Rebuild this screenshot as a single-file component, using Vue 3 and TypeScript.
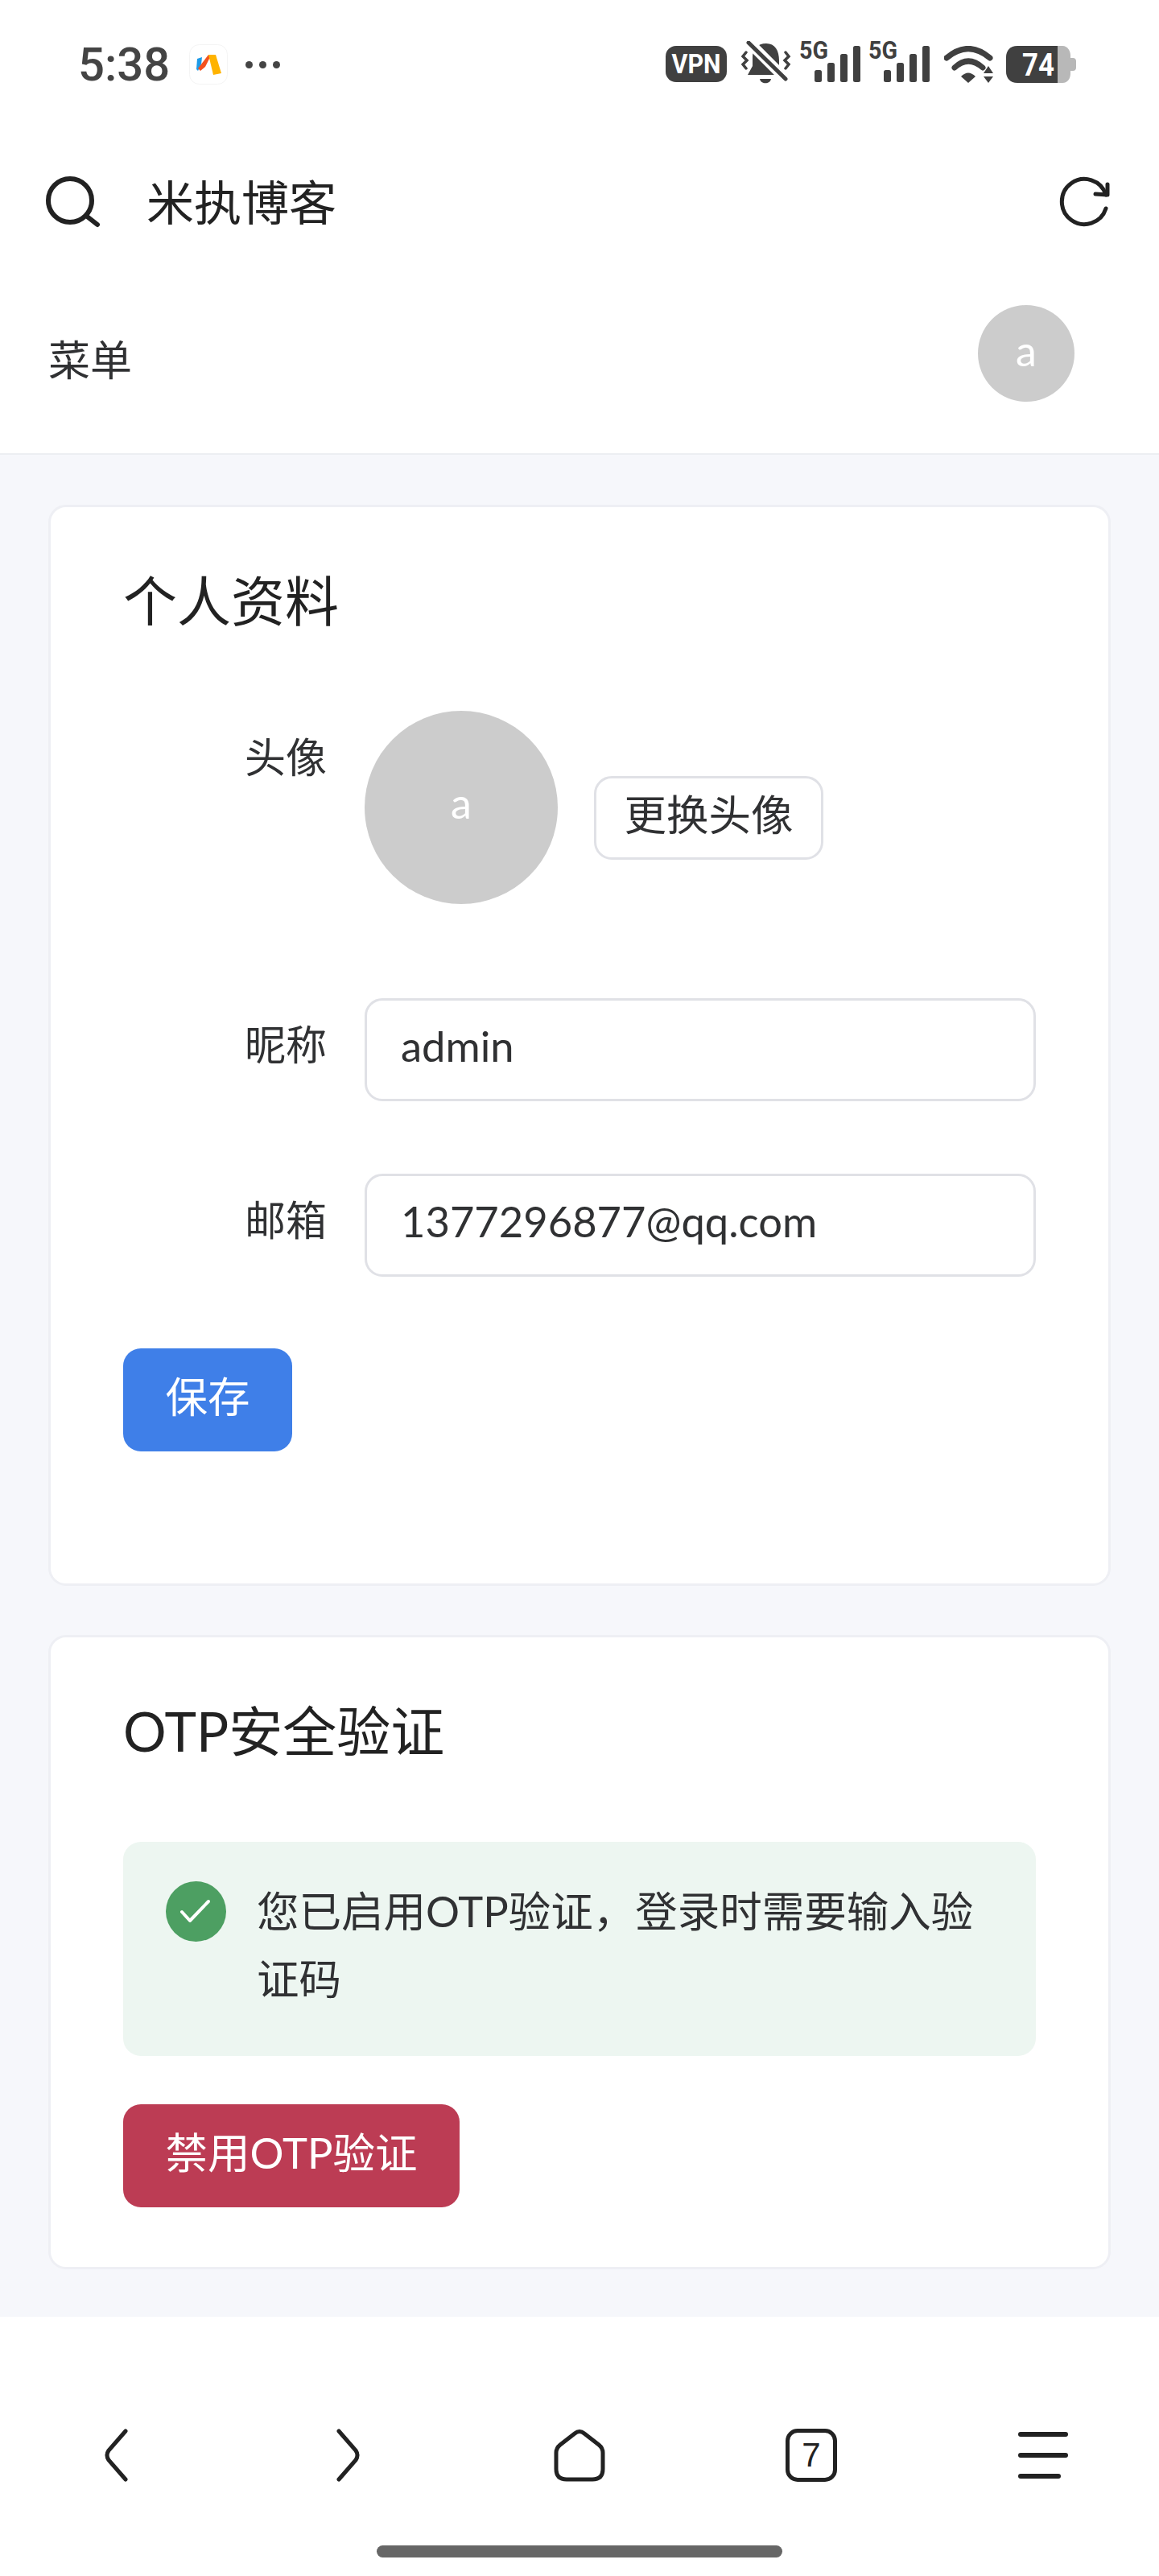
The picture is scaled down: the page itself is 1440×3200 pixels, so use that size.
<script setup lang="ts">
import { ref } from 'vue';

const nickname = ref('admin');
const email = ref('1377296877@qq.com');
</script>

<template>
  <div class="page">
    <div class="status">
      <div class="status-left">
        <span class="time">5:38</span>
        <svg class="app-icon" width="48" height="50" viewBox="0 0 48 50">
          <rect x="0.5" y="0.5" width="47" height="49" rx="12" fill="#fff" stroke="#f4f4f4" />
          <polygon points="10,18 16,16 15,25 11,33 9,31" fill="#1e9be8" />
          <polygon points="11,30 24,13 27,14 20,28 14,33" fill="#f4511e" />
          <polygon points="24,13 33,13 40,36 30,38" fill="#ffb300" />
        </svg>
        <span class="dots"><i></i><i></i><i></i></span>
      </div>
      <div class="status-right">
        <svg class="drop-4" width="76" height="53" viewBox="0 -4 76 53">
          <rect width="76" height="45" rx="13" fill="#404040" />
          <text x="38" y="34" text-anchor="middle" class="svg-bold" font-size="33" fill="#fff" textLength="61" lengthAdjust="spacingAndGlyphs">VPN</text>
        </svg>
        <svg class="ml-8 drop-2" width="62" height="53" viewBox="0 0 62 53">
          <path d="M31 3C42 3 47 12 47 24V31L53 42H8L14 31V20C14 10 20 3 31 3Z" fill="#404040" />
          <path d="M9 1L55 47" stroke="#fff" stroke-width="13" />
          <path d="M9 2L55 47" stroke="#404040" stroke-width="5" stroke-linecap="round" />
          <path d="M23 47H37C36 54 24 54 23 47Z" fill="#404040" />
          <path d="M6 14L2 19L7 24L2 29L6 34M55 14L59 19L54 24L59 29L55 34" fill="none" stroke="#404040" stroke-width="3.5" stroke-linecap="round" />
        </svg>
        <svg width="76" height="62" viewBox="0 -10 76 62">
          <text x="0" y="23" class="svg-bold" font-size="32" fill="#404040" textLength="36" lengthAdjust="spacingAndGlyphs">5G</text>
          <rect x="19" y="37" width="9" height="15" rx="2.5" fill="#404040" />
          <rect x="35" y="28" width="9" height="24" rx="2.5" fill="#404040" />
          <rect x="51" y="17" width="9" height="35" rx="2.5" fill="#404040" />
          <rect x="67" y="7" width="9" height="45" rx="2.5" fill="#404040" />
        </svg>
        <svg width="76" height="62" viewBox="0 -10 76 62">
          <text x="0" y="23" class="svg-bold" font-size="32" fill="#404040" textLength="36" lengthAdjust="spacingAndGlyphs">5G</text>
          <rect x="19" y="37" width="9" height="15" rx="2.5" fill="#404040" />
          <rect x="35" y="28" width="9" height="24" rx="2.5" fill="#404040" />
          <rect x="51" y="17" width="9" height="35" rx="2.5" fill="#404040" />
          <rect x="67" y="7" width="9" height="45" rx="2.5" fill="#404040" />
        </svg>
        <svg class="ml-8 drop-2" width="62" height="47" viewBox="0 0 62 47">
          <path d="M3 15Q30 -8 57 15" fill="none" stroke="#404040" stroke-width="7" stroke-linecap="round" />
          <path d="M13 27Q30 11 48 27" fill="none" stroke="#404040" stroke-width="7" stroke-linecap="round" />
          <path d="M21 38Q30 29 39 38L30 46Z" fill="#404040" />
          <path d="M55 25L61 34H49ZM49 38H61L55 46Z" fill="#404040" />
        </svg>
        <svg class="ml-5 drop-1" width="88" height="46" viewBox="0 0 88 46">
          <path d="M60 0H70C77 0 80 7 80 12V34C80 40 77 46 70 46H60Z" fill="#b8b8b8" />
          <path d="M80 15H83C86 15 87 17 87 19V27C87 29 86 31 83 31H80Z" fill="#b8b8b8" />
          <path d="M14 0H64V46H14C5 46 0 40 0 32V14C0 6 5 0 14 0Z" fill="#404040" />
          <text x="40" y="37" text-anchor="middle" class="svg-bold" font-size="39" fill="#fff" textLength="40" lengthAdjust="spacingAndGlyphs">74</text>
        </svg>
      </div>
    </div>

    <div class="browser-bar">
      <svg width="72" height="68" viewBox="0 0 72 68">
        <circle cx="33" cy="33" r="27" fill="none" stroke="#222" stroke-width="6" />
        <path d="M53 52L67 63" fill="none" stroke="#222" stroke-width="6" stroke-linecap="round" />
      </svg>
      <span class="site-title">米执博客</span>
      <svg class="reload" width="66" height="66" viewBox="0 0 66 66">
        <path d="M58 42A28 28 0 1 1 58 25" fill="none" stroke="#222" stroke-width="5" stroke-linecap="round" />
        <path d="M60 12L60 25L45 24" fill="none" stroke="#222" stroke-width="5" stroke-linecap="round" stroke-linejoin="round" />
      </svg>
    </div>

    <div class="nav">
      <span class="nav-menu">菜单</span>
      <div class="avatar avatar-small">a</div>
    </div>

    <main class="content">
      <section class="card card-profile">
        <h2 class="card-title">个人资料</h2>
        <div class="row row-avatar">
          <label class="row-label">头像</label>
          <div class="avatar avatar-big">a</div>
          <button class="btn btn-plain">更换头像</button>
        </div>
        <div class="row row-nick">
          <label class="row-label">昵称</label>
          <input v-model="nickname" class="input" type="text" />
        </div>
        <div class="row row-mail">
          <label class="row-label">邮箱</label>
          <input v-model="email" class="input" type="text" />
        </div>
        <button class="btn btn-primary">保存</button>
      </section>

      <section class="card card-otp">
        <h2 class="card-title">OTP安全验证</h2>
        <div class="alert">
          <svg class="alert-icon" width="75" height="75" viewBox="0 0 75 75">
            <circle cx="37.5" cy="37.5" r="37.5" fill="#4d9f62" />
            <path d="M20 38L30 49L53 25" fill="none" stroke="#fff" stroke-width="4" stroke-linecap="round" stroke-linejoin="round" />
          </svg>
          <p class="alert-text">您已启用OTP验证，登录时需要输入验证码</p>
        </div>
        <button class="btn btn-danger">禁用OTP验证</button>
      </section>
    </main>

    <footer class="bottom">
      <div class="bottom-icons">
        <svg width="29" height="66" viewBox="0 0 29 66">
          <path d="M26 3L5 27Q1 33 5 39L26 63" fill="none" stroke="#222" stroke-width="5" stroke-linecap="round" />
        </svg>
        <svg width="29" height="66" viewBox="0 0 29 66">
          <path d="M3 3L24 27Q28 33 24 39L3 63" fill="none" stroke="#222" stroke-width="5" stroke-linecap="round" />
        </svg>
        <svg width="64" height="66" viewBox="0 0 64 66">
          <path d="M26 6Q32 1 38 6L56 20Q61 24 61 30V50Q61 63 48 63H16Q3 63 3 50V30Q3 24 8 20Z" fill="none" stroke="#222" stroke-width="5" />
        </svg>
        <div class="tabs-icon">7</div>
        <div class="menu-icon"><i></i><i></i><i class="short"></i></div>
      </div>
      <div class="home-bar"></div>
    </footer>
  </div>
</template>

<style scoped>
.page {
  width: 1440px;
  height: 3200px;
  display: flex;
  flex-direction: column;
  background: #fff;
  color: #222;
  font-family: Lato, "Noto Sans CJK SC", sans-serif;
  overflow: hidden;
}

.status {
  height: 160px;
  flex-shrink: 0;
  box-sizing: border-box;
  padding: 50px 102px 0 97px;
  display: flex;
  justify-content: space-between;
  align-items: flex-start;
}

.status-left {
  display: flex;
  align-items: center;
  height: 60px;
}

.time {
  font-family: Roboto, sans-serif;
  font-weight: 500;
  font-size: 58px;
  line-height: 60px;
  color: #444;
}

.app-icon {
  margin-left: 24px;
}

.dots {
  display: flex;
  gap: 8px;
  margin-left: 22px;
}

.dots i {
  width: 9px;
  height: 9px;
  border-radius: 50%;
  background: #444;
}

.status-right {
  display: flex;
  align-items: flex-end;
  gap: 10px;
  height: 52px;
}

.ml-8 {
  margin-left: 8px;
}

.ml-5 {
  margin-left: 5px;
}

.drop-4 {
  margin-bottom: -4px;
}

.drop-2 {
  margin-bottom: -2px;
}

.drop-1 {
  margin-bottom: -1px;
}

.svg-bold {
  font-family: Roboto, sans-serif;
  font-weight: 700;
}

.browser-bar {
  height: 180px;
  flex-shrink: 0;
  box-sizing: border-box;
  padding: 0 58px 0 54px;
  display: flex;
  align-items: center;
}

.site-title {
  margin-left: 56px;
  padding-bottom: 4px;
  font-size: 59px;
  color: #222;
}

.reload {
  margin-left: auto;
}

.nav {
  height: 225px;
  flex-shrink: 0;
  box-sizing: border-box;
  padding: 39px 105px 0 60px;
  display: flex;
  justify-content: space-between;
  align-items: flex-start;
  border-bottom: 2px solid #eceef2;
}

.nav-menu {
  margin-top: 38px;
  font-size: 52px;
  line-height: 60px;
  color: #303133;
}

.avatar {
  border-radius: 50%;
  background: #cccccc;
  color: #fff;
  display: flex;
  align-items: center;
  justify-content: center;
  flex-shrink: 0;
  box-sizing: border-box;
  font-size: 52px;
}

.avatar-small {
  width: 120px;
  height: 120px;
  padding-bottom: 8px;
}

.avatar-big {
  width: 240px;
  height: 240px;
  padding-bottom: 12px;
}

.content {
  height: 2313px;
  flex-shrink: 0;
  box-sizing: border-box;
  padding: 62px 60px 0;
  background: #f6f7fb;
  display: flex;
  flex-direction: column;
  gap: 61px;
}

.card {
  box-sizing: border-box;
  background: #fff;
  border: 3px solid #eeeff4;
  border-radius: 22px;
  padding: 76px 90px 0;
}

.card-profile {
  height: 1343px;
}

.card-otp {
  height: 788px;
}

.card-title {
  margin: 0 0 97px;
  font-size: 67px;
  line-height: 80px;
  font-weight: 400;
  color: #222;
}

.card-otp .card-title {
  margin-bottom: 98px;
}

.row {
  display: flex;
  align-items: flex-start;
}

.row-label {
  width: 253px;
  flex-shrink: 0;
  box-sizing: border-box;
  text-align: right;
  font-size: 51px;
  line-height: 116px;
  color: #303133;
  margin-right: 47px;
}

.row-avatar {
  margin-bottom: 117px;
}

.row-avatar .btn {
  margin-left: 45px;
  margin-top: 81px;
}

.row-nick {
  margin-bottom: 90px;
}

.row-mail {
  margin-bottom: 89px;
}

.input {
  width: 834px;
  height: 128px;
  box-sizing: border-box;
  border: 3px solid #e0e1e6;
  border-radius: 22px;
  padding: 0 42px 11px;
  font: inherit;
  font-size: 52.5px;
  color: #303133;
  outline: none;
  background: #fff;
}

.btn {
  display: block;
  box-sizing: border-box;
  border: none;
  border-radius: 22px;
  font: inherit;
  font-size: 52.5px;
  padding: 0 0 14px;
  text-align: center;
}

.btn-plain {
  width: 285px;
  height: 104px;
  background: #fff;
  border: 3px solid #e0e1e6;
  color: #303133;
}

.btn-primary {
  width: 210px;
  height: 128px;
  background: #3f7fe8;
  color: #fff;
}

.btn-danger {
  width: 418px;
  height: 128px;
  background: #bc3c54;
  color: #fff;
}

.alert {
  height: 266px;
  box-sizing: border-box;
  padding: 44px 51px 0 51px;
  margin-bottom: 60px;
  background: #edf6f1;
  border-radius: 22px;
  display: flex;
  align-items: flex-start;
}

.alert-icon {
  flex-shrink: 0;
  margin: 5px 38px 0 2px;
}

.alert-text {
  margin: 0;
  font-size: 52.5px;
  line-height: 84px;
  color: #303133;
}

.bottom {
  flex: 1;
  background: #fff;
  display: flex;
  flex-direction: column;
  align-items: center;
  padding-top: 139px;
}

.bottom-icons {
  width: 1440px;
  height: 66px;
  display: grid;
  grid-template-columns: repeat(5, 288px);
  justify-items: center;
  align-items: center;
}

.tabs-icon {
  width: 64px;
  height: 66px;
  box-sizing: border-box;
  border: 5px solid #222;
  border-radius: 15px;
  display: flex;
  align-items: center;
  justify-content: center;
  font-family: "Liberation Sans", sans-serif;
  font-size: 42px;
  color: #222;
}

.menu-icon {
  width: 62px;
  display: flex;
  flex-direction: column;
  gap: 20px;
}

.menu-icon i {
  display: block;
  height: 6px;
  border-radius: 3px;
  background: #222;
}

.menu-icon i.short {
  width: 53px;
}

.home-bar {
  margin-top: 79px;
  width: 504px;
  height: 15px;
  border-radius: 8px;
  background: #666;
}
</style>
